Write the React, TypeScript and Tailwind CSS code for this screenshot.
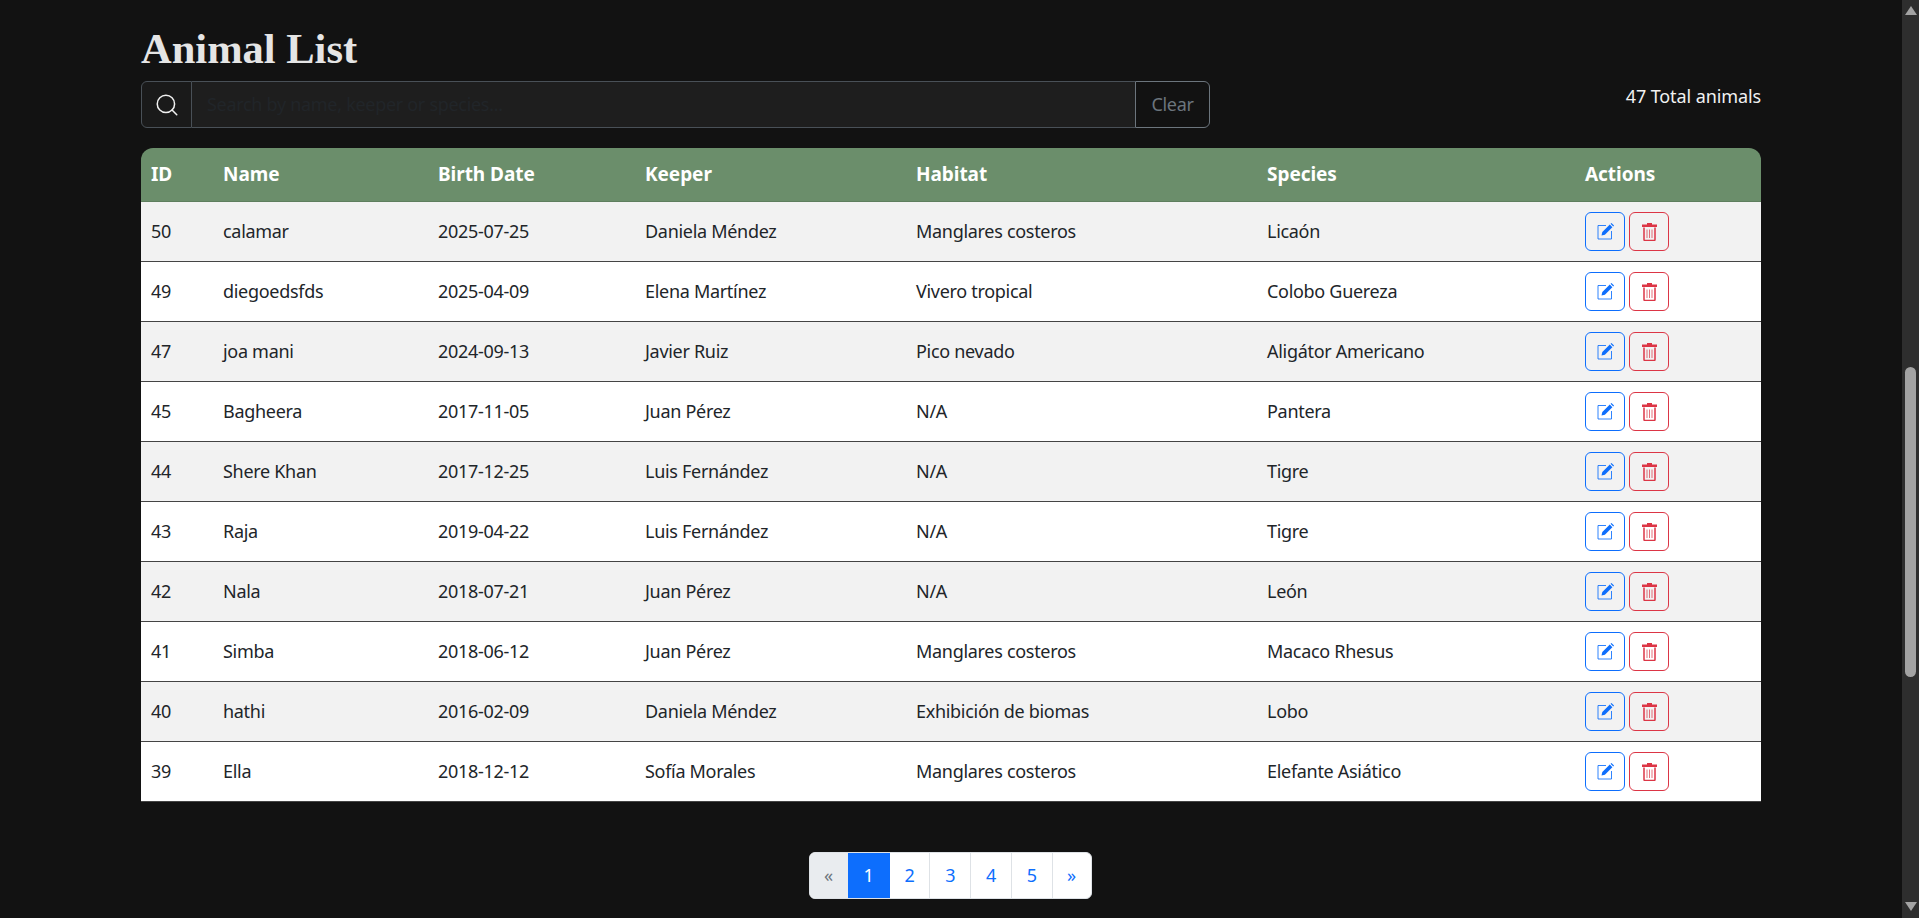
import { Search } from "lucide-react";

type Animal = {
  id: number;
  name: string;
  birthDate: string;
  keeper: string;
  habitat: string;
  species: string;
};

const animals: Animal[] = [
  { id: 50, name: "calamar", birthDate: "2025-07-25", keeper: "Daniela Méndez", habitat: "Manglares costeros", species: "Licaón" },
  { id: 49, name: "diegoedsfds", birthDate: "2025-04-09", keeper: "Elena Martínez", habitat: "Vivero tropical", species: "Colobo Guereza" },
  { id: 47, name: "joa mani", birthDate: "2024-09-13", keeper: "Javier Ruiz", habitat: "Pico nevado", species: "Aligátor Americano" },
  { id: 45, name: "Bagheera", birthDate: "2017-11-05", keeper: "Juan Pérez", habitat: "N/A", species: "Pantera" },
  { id: 44, name: "Shere Khan", birthDate: "2017-12-25", keeper: "Luis Fernández", habitat: "N/A", species: "Tigre" },
  { id: 43, name: "Raja", birthDate: "2019-04-22", keeper: "Luis Fernández", habitat: "N/A", species: "Tigre" },
  { id: 42, name: "Nala", birthDate: "2018-07-21", keeper: "Juan Pérez", habitat: "N/A", species: "León" },
  { id: 41, name: "Simba", birthDate: "2018-06-12", keeper: "Juan Pérez", habitat: "Manglares costeros", species: "Macaco Rhesus" },
  { id: 40, name: "hathi", birthDate: "2016-02-09", keeper: "Daniela Méndez", habitat: "Exhibición de biomas", species: "Lobo" },
  { id: 39, name: "Ella", birthDate: "2018-12-12", keeper: "Sofía Morales", habitat: "Manglares costeros", species: "Elefante Asiático" },
];

const headers = ["ID", "Name", "Birth Date", "Keeper", "Habitat", "Species", "Actions"];
const pages = ["2", "3", "4", "5"];

const EditIcon = () => (
  <svg className="h-[17px] w-[17px]" viewBox="0 0 17 17" fill="none">
    <path d="M9 2.5H1v13.5h13.5V8" stroke="currentColor" strokeWidth="1" opacity="0.85" />
    <path d="M4.5 12.5l.8-3.4L12.8 1.6l2.6 2.6-7.5 7.5z" fill="currentColor" />
    <path d="M13.6.8l.8-.8 2.6 2.6-.8.8z" fill="currentColor" />
  </svg>
);

const TrashIcon = () => (
  <svg className="h-[18px] w-[15px]" viewBox="0 0 15 18" fill="none">
    <path d="M5 0h5v1.5h5V4H0V1.5h5z" fill="currentColor" />
    <path d="M2 4.5v12a1 1 0 001 1h9a1 1 0 001-1v-12" stroke="currentColor" strokeWidth="1.5" />
    <path d="M5 6.5v8.5M7.5 6.5v8.5M10 6.5v8.5" stroke="currentColor" strokeWidth="1" opacity="0.7" />
  </svg>
);

const App = () => {
  return (
    <div className="flex h-screen overflow-hidden bg-[#121212] font-['Noto_Sans',sans-serif] text-[18px] tracking-[-0.3px]">
      <main className="flex-1 px-[141px]">
        {/* Title */}
        <h1 className="h-[81px] pt-[24px] font-['Liberation_Serif',serif] text-[42.5px] leading-[50px] font-bold tracking-normal text-[#e5e5e5]">
          Animal List
        </h1>

        {/* Search + total */}
        <div className="flex h-[67px] items-start justify-between">
          <div className="flex h-[47px] w-[1069px]">
            <span className="flex w-[51px] items-center justify-center rounded-l-md border border-[#495057] bg-[#1a1a1a]">
              <Search className="h-[26px] w-[26px] text-[#f0f0f0]" strokeWidth={1.4} />
            </span>
            <input
              className="min-w-0 flex-1 border-y border-[#495057] bg-[#1e1e1e] px-[15px] outline-none placeholder:text-[#212529]"
              placeholder="Search by name, keeper or species..."
            />
            <button className="w-[75px] rounded-r-md border border-[#6c757d] text-[#6c757d]">Clear</button>
          </div>
          <span className="mt-[2px] tracking-[-0.1px] text-[#f1f1f1]">47 Total animals</span>
        </div>

        {/* Table */}
        <table className="w-full table-fixed border-separate border-spacing-0">
          <colgroup>
            <col className="w-[72px]" />
            <col className="w-[215px]" />
            <col className="w-[207px]" />
            <col className="w-[271px]" />
            <col className="w-[351px]" />
            <col className="w-[318px]" />
            <col className="w-[186px]" />
          </colgroup>
          <thead>
            <tr className="bg-[#6b8e6b] text-left text-white">
              {headers.map((header, i) => (
                <th
                  key={header}
                  className={`h-[54px] border-b border-[#5e7e5e] px-[10px] text-[19px] font-bold tracking-[-0.05px] ${i === 0 ? "rounded-tl-xl" : ""} ${i === headers.length - 1 ? "rounded-tr-xl" : ""}`}
                >
                  {header}
                </th>
              ))}
            </tr>
          </thead>
          <tbody>
            {animals.map((animal, index) => (
              <tr key={animal.id} className={index % 2 === 0 ? "bg-[#f2f2f2]" : "bg-white"}>
                {[animal.id, animal.name, animal.birthDate, animal.keeper, animal.habitat, animal.species].map((value, i) => (
                  <td key={i} className="h-[60px] border-b border-[#444] px-[10px] text-[#212529]">
                    {value}
                  </td>
                ))}
                <td className="h-[60px] border-b border-[#444] px-[10px]">
                  <div className="flex gap-[4px]">
                    <button className="flex h-[39px] w-[40px] items-center justify-center rounded-md border border-[#0d6efd] text-[#0d6efd]">
                      <EditIcon />
                    </button>
                    <button className="flex h-[39px] w-[40px] items-center justify-center rounded-md border border-[#dc3545] text-[#dc3545]">
                      <TrashIcon />
                    </button>
                  </div>
                </td>
              </tr>
            ))}
          </tbody>
        </table>

        {/* Pagination */}
        <nav className="mt-[50px] flex justify-center pr-[2px]">
          <ul className="flex h-[47px] overflow-hidden rounded-md border border-[#dee2e6] bg-white text-[#0d6efd]">
            <li className="flex w-[38px] items-center justify-center bg-[#e9ecef] text-[#6c757d]">«</li>
            <li className="flex w-[42px] items-center justify-center bg-[#0d6efd] text-white">1</li>
            {pages.map((page) => (
              <li key={page} className="flex w-[40.75px] items-center justify-center border-r border-[#dee2e6]">
                {page}
              </li>
            ))}
            <li className="flex w-[38px] items-center justify-center">»</li>
          </ul>
        </nav>
      </main>

      {/* Scrollbar */}
      <aside className="flex w-[18px] flex-col items-center bg-[#2e2e2e]">
        <svg className="mt-[6px] h-[9px] w-[12px] fill-[#a3a3a3]" viewBox="0 0 12 9">
          <path d="M6 0l6 9H0z" />
        </svg>
        <div className="mt-[352px] h-[310px] w-[11px] rounded-md bg-[#a3a3a3]" />
        <svg className="mt-[225px] h-[9px] w-[12px] fill-[#a3a3a3]" viewBox="0 0 12 9">
          <path d="M0 0h12L6 9z" />
        </svg>
      </aside>
    </div>
  );
};

export default App;
